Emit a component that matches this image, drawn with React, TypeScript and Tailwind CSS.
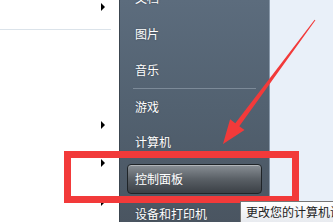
import React from 'react'

// Start menu excerpt: white program list, dark right column, red annotation overlays

const Tri: React.FC = () => (
  <svg width="4" height="8" viewBox="0 0 4 8" className="block">
    <path d="M0 0 L4 4 L0 8 Z" fill="#000" />
  </svg>
)

const LeftRow: React.FC<{ h: string; arrow?: boolean; line?: boolean }> = ({ h, arrow, line }) => (
  <div className={`${h} flex items-center justify-end pr-[14px] ${line ? 'border-b border-[#dbe3ea] mr-[8px] pr-[6px]' : ''}`}>
    {arrow && <Tri />}
  </div>
)

const Item: React.FC<{ label: string; h: string }> = ({ label, h }) => (
  <div className={`${h} flex items-center pl-[15px] text-[12px] text-white`} style={{ textShadow: '0 0 2px rgba(0,0,0,0.35)' }}>
    {label}
  </div>
)

const App: React.FC = () => {
  return (
    <div
      className="relative w-[333px] h-[222px] overflow-hidden flex bg-[#e9f0f9]"
      style={{ fontFamily: '"Noto Sans CJK SC", "Noto Sans", sans-serif' }}
    >
      {/* left white list */}
      <div className="w-[119px] h-full bg-white flex flex-col">
        <LeftRow h="h-[14px]" arrow />
        <LeftRow h="h-[16px]" line />
        <div className="h-[88px]" />
        <LeftRow h="h-[14px]" arrow />
        <div className="h-[24px]" />
        <LeftRow h="h-[14px]" arrow />
        <div className="h-[25px]" />
        <LeftRow h="h-[14px]" arrow />
      </div>

      {/* dark right column */}
      <div className="w-[151px] h-full border-l border-[#3c4650] border-r border-r-[#8a9aab] bg-gradient-to-b from-[#5c6c7d] via-[#526170] to-[#4a5561] flex flex-col">
        <div className="-mt-[20px] flex flex-col">
          <Item label="文档" h="h-[36px]" />
          <Item label="图片" h="h-[36px]" />
          <Item label="音乐" h="h-[36px]" />
          <div className="h-px mx-[13px] bg-[#7c8a98]" />
          <Item label="游戏" h="h-[35px]" />
          <Item label="计算机" h="h-[35px]" />
          <div className="h-[40px] flex items-center px-[7px]">
            <div className="w-full h-[30px] rounded-[4px] border border-[#1f2428] bg-gradient-to-b from-[#8a9096] via-[#5a6066] to-[#3b4046] flex items-center pl-[7px] text-[12px] text-white shadow-[inset_0_1px_0_rgba(255,255,255,0.35)]">
              控制面板
            </div>
          </div>
          <Item label="设备和打印机" h="h-[30px]" />
        </div>
      </div>
      <div className="flex-1" />

      {/* red annotation box */}
      <div className="absolute left-[64px] top-[151px] w-[235px] h-[52px] border-[7px] border-[#f23a3a]" />

      {/* tooltip */}
      <div className="absolute left-[240px] top-[201px] w-[120px] h-[24px] bg-gradient-to-b from-white to-[#e6e9ee] border border-[#767676] pl-[5px] text-[12px] leading-[20px] text-[#222] whitespace-nowrap">
        更改您的计算机设置并自定义其功能。
      </div>

      {/* red arrow */}
      <svg className="absolute left-0 top-0" width="333" height="222" viewBox="0 0 333 222">
        <polygon
          points="314.6,19.7 315.4,20.3 239.3,126.2 244.5,130.1 223,144 230.1,119.3 235.3,123.2"
          fill="#f23a3a"
        />
      </svg>
    </div>
  )
}

export default App
